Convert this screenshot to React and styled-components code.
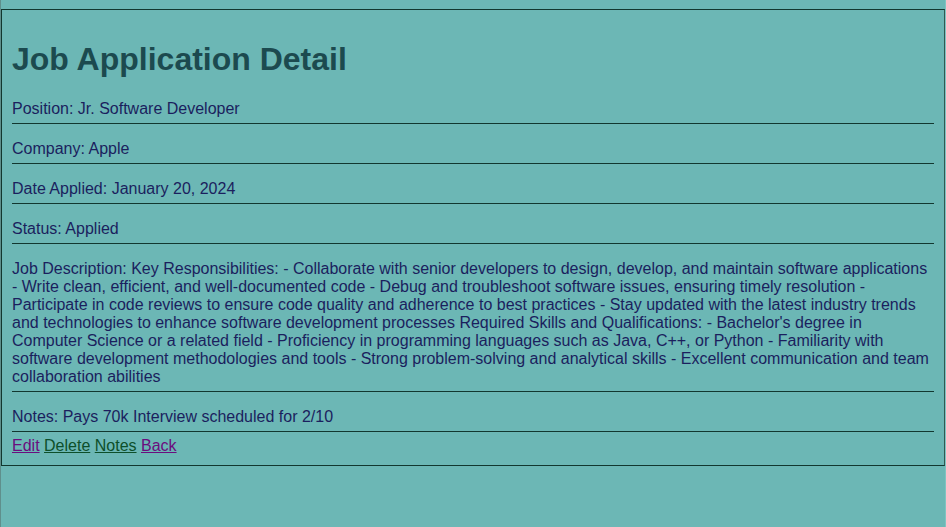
import React from "react";
import styled, { createGlobalStyle } from "styled-components";

const Global = createGlobalStyle`
  html, body { margin: 0; padding: 0; background: #6cb7b5; }
  body { font-family: "Liberation Sans", Arial, sans-serif; min-height: 527px; }
`;

const Frame = styled.div`
  min-height: 527px;
  border-left: 1px solid #5f8f8c;
  border-right: 1px solid #7fc4c2;
  box-sizing: border-box;
  padding-top: 9px;
`;

const Card = styled.div`
  border: 1px solid #12372f;
  border-right-color: #2f5a52;
  width: 944px;
  box-sizing: border-box;
  padding: 10px;
`;

const Title = styled.h1`
  font-size: 32px;
  font-weight: bold;
  color: #1c4a4f;
  margin: 21.44px 0;
`;

const Row = styled.p`
  margin: 16px 0 4px;
  padding-bottom: 5px;
  border-bottom: 1px solid #12372f;
  color: #1b1f5e;
  font-size: 16px;
  line-height: 18px;
`;

const Links = styled.div`
  font-size: 16px;
  line-height: 18px;
  margin-top: 5px;
`;

const Link = styled.a`
  color: ${(p) => (p.$visited ? "#6b0d7e" : "#0d4f2a")};
  text-decoration: underline;
  cursor: pointer;
`;

const description =
  "Job Description: Key Responsibilities: - Collaborate with senior developers to design, develop, and maintain software applications - Write clean, efficient, and well-documented code - Debug and troubleshoot software issues, ensuring timely resolution - Participate in code reviews to ensure code quality and adherence to best practices - Stay updated with the latest industry trends and technologies to enhance software development processes Required Skills and Qualifications: - Bachelor's degree in Computer Science or a related field - Proficiency in programming languages such as Java, C++, or Python - Familiarity with software development methodologies and tools - Strong problem-solving and analytical skills - Excellent communication and team collaboration abilities";

export default function App() {
  return (
    <>
      <Global />
      <Frame>
        <Card>
          <Title>Job Application Detail</Title>
          <Row>Position: Jr. Software Developer</Row>
          <Row>Company: Apple</Row>
          <Row>Date Applied: January 20, 2024</Row>
          <Row>Status: Applied</Row>
          <Row>{description}</Row>
          <Row>Notes: Pays 70k Interview scheduled for 2/10</Row>
          <Links>
            <Link $visited>Edit</Link> <Link>Delete</Link> <Link>Notes</Link>{" "}
            <Link $visited>Back</Link>
          </Links>
        </Card>
      </Frame>
    </>
  );
}
